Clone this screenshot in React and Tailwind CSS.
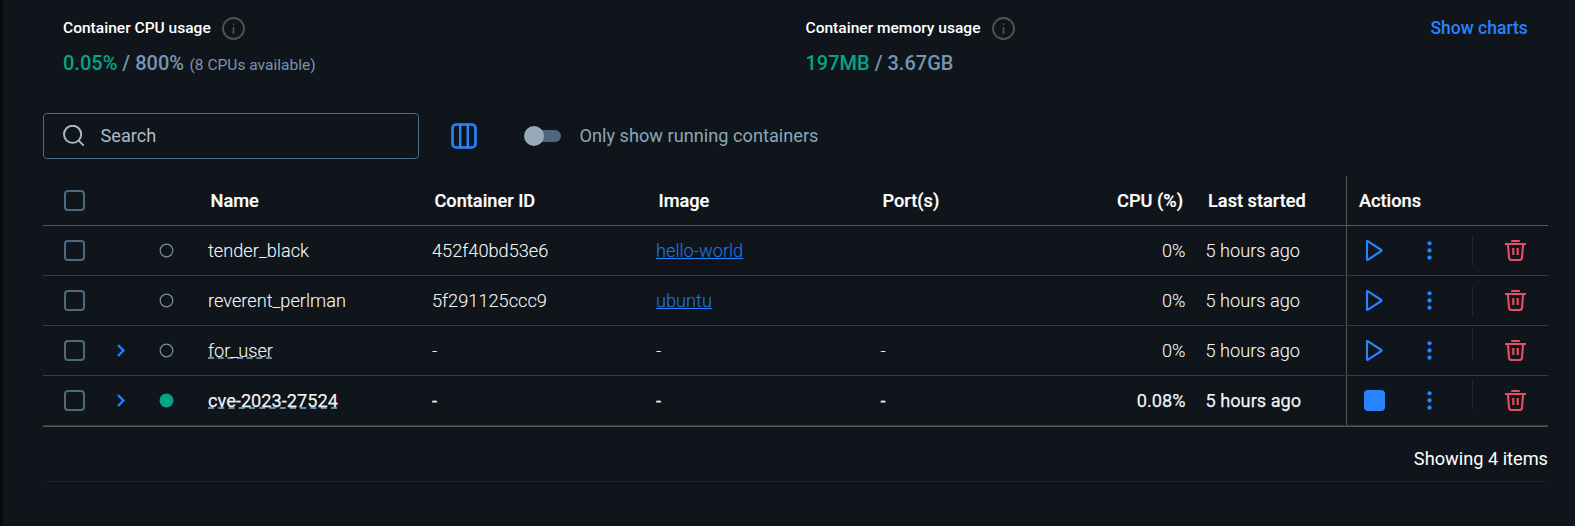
const COLS = 'grid grid-cols-[56px_44px_47px_224px_224px_224px_224px_109px_150px]';

const ROWS = [
  { name: 'tender_black', id: '452f40bd53e6', image: 'hello-world', cpu: '0%' },
  { name: 'reverent_perlman', id: '5f291125ccc9', image: 'ubuntu', cpu: '0%' },
  { name: 'for_user', group: true, cpu: '0%' },
  { name: 'cve-2023-27524', group: true, running: true, cpu: '0.08%' },
];

function InfoIcon() {
  return (
    <svg width="23" height="23" viewBox="0 0 23 23" fill="none" stroke="#505356">
      <circle cx="11.5" cy="11.5" r="10.5" strokeWidth="1.9" />
      <path d="M11.5 10.3V16.8" strokeWidth="1.7" />
      <path d="M11.5 6.4V8.2" strokeWidth="1.7" />
    </svg>
  );
}

function SearchIcon() {
  return (
    <svg width="22" height="22" viewBox="0 0 22 22" fill="none" stroke="#a9bbc8" strokeWidth="1.9" strokeLinecap="round">
      <circle cx="9.6" cy="9.3" r="8.6" />
      <path d="M15.8 15.6L20.2 20.1" />
    </svg>
  );
}

function ColumnsIcon() {
  return (
    <svg width="26" height="26" viewBox="0 0 26 26" fill="none" stroke="#2684ff">
      <rect x="1.5" y="1.5" width="23" height="23" rx="3.6" strokeWidth="2.6" />
      <path d="M9.2 2V24M16.8 2V24" strokeWidth="2.4" />
    </svg>
  );
}

function PlayIcon() {
  return (
    <svg width="18" height="21" viewBox="0 0 18 21" fill="none" stroke="#2684ff" strokeWidth="2.1" strokeLinejoin="round">
      <path d="M2 1.5V19.5Q2 20.2 2.7 19.8L16.3 11Q17 10.5 16.3 10L2.7 1.2Q2 0.8 2 1.5Z" />
    </svg>
  );
}

function StatusDot({ running }) {
  return (
    <svg width="15" height="15" viewBox="0 0 15 15" fill="none">
      {running ? <circle cx="7.5" cy="7.5" r="6.9" fill="#03a589" /> : <circle cx="7.5" cy="7.5" r="6.3" stroke="#7890a5" strokeWidth="1.2" />}
    </svg>
  );
}

function DotsIcon() {
  return (
    <svg width="5" height="19" viewBox="0 0 5 19" fill="#2684ff">
      <circle cx="2.5" cy="2.3" r="2.15" />
      <circle cx="2.5" cy="9.5" r="2.15" />
      <circle cx="2.5" cy="16.7" r="2.15" />
    </svg>
  );
}

function TrashIcon() {
  return (
    <svg width="21" height="21" viewBox="0 0 21 21" fill="none" stroke="#ea4d62">
      <path d="M6.2 1H14.8" strokeWidth="2" />
      <path d="M0 4H21" strokeWidth="2" />
      <path d="M2.9 4.5L4 17.6Q4.2 20 6.6 20H14.4Q16.8 20 17 17.6L18.1 4.5" strokeWidth="2.1" />
      <path d="M8.3 8V15M12.7 8V15" strokeWidth="2.1" />
    </svg>
  );
}

function Checkbox() {
  return <span className="ml-[21px] size-[21px] rounded-[4px] border-2 border-[#4d697f]" />;
}

function Stat({ title, used, total, note, className }) {
  return (
    <div className={className}>
      <div className="flex h-[23px] items-center gap-[11.5px]">
        <span className="pb-[2px] text-[15.55px] font-medium">{title}</span>
        <InfoIcon />
      </div>
      <div className="mt-[8px] text-[20px] leading-[30px] font-medium text-[#7794b3]">
        <span className="text-[#03a589]">{used}</span> / {total}
        {note && <span className="ml-[5.5px] text-[15.55px] font-normal">{note}</span>}
      </div>
    </div>
  );
}

function Row({ row }) {
  return (
    <div
      className={
        'flex h-[50px] text-white/95 ' +
        (row.running ? 'font-normal [-webkit-text-stroke:0.25px]' : 'font-light [-webkit-text-stroke:0.15px]')
      }
    >
      <div className={COLS + ' w-[1302px] items-center border-b border-[#2e3f4b]'}>
        <Checkbox />
        <span className="flex justify-center">
          {row.group && (
            <svg width="8" height="13" viewBox="0 0 8 13" fill="none" stroke="#2684ff" strokeWidth="2.3">
              <path d="M1 1L6.4 6.5L1 12" />
            </svg>
          )}
        </span>
        <span className="flex justify-center">
          <StatusDot running={row.running} />
        </span>
        <span className="pl-[18px]">
          {row.group ? (
            <span className="underline decoration-[#6d8aa5] decoration-dashed decoration-2 underline-offset-[1px] [text-decoration-skip-ink:none]">
              {row.name}
            </span>
          ) : (
            row.name
          )}
        </span>
        <span className="pl-[18px]">{row.id || '-'}</span>
        <span className="pl-[18px]">
          {row.image ? (
            <a className="text-[#2172dc] underline decoration-[#2684ff] decoration-1 underline-offset-1">{row.image}</a>
          ) : (
            '-'
          )}
        </span>
        <span className="pl-[18.5px]">{row.group ? '-' : ''}</span>
        <span className="pr-[9.5px] text-right">{row.cpu}</span>
        <span className="pl-[10.5px]">5 hours ago</span>
      </div>
      <div className="ml-px flex w-[202px] items-center border-b border-l border-b-[#2e3f4b] border-l-[#555656]">
        <span className="flex w-[54px] justify-center">
          {row.running ? <span className="-mr-px size-[21px] rounded-[4px] bg-[#2684ff]" /> : <PlayIcon />}
        </span>
        <span className="flex w-[57px] justify-center">
          <DotsIcon />
        </span>
        <span className={'ml-[14px] h-[30px] w-px bg-[#22272d] ' + (row.group ? '-mt-[14px]' : '')} />
        <span className="ml-[32px]">
          <TrashIcon />
        </span>
      </div>
    </div>
  );
}

export default function App() {
  return (
    <div className="h-[526px] w-[1575px] overflow-hidden border-l-3 border-[#080b0e] bg-[#10151b] font-['Roboto',sans-serif] text-[18.2px] leading-[26px] whitespace-nowrap text-white">
      <div className="flex h-[113px] pt-[17px] pl-[60px]">
        <Stat className="w-[742.5px]" title="Container CPU usage" used="0.05%" total="800%" note="(8 CPUs available)" />
        <Stat className="w-[625px]" title="Container memory usage" used="197MB" total="3.67GB" />
        <a className="-mt-[2px] text-[17.5px] font-medium text-[#2684ff]">Show charts</a>
      </div>
      <div className="flex h-[46px] items-center pl-10">
        <div className="flex h-[46px] w-[376px] items-center rounded-[4px] border border-[#4d697f] pl-[18.5px] text-[#a9bbc8]">
          <SearchIcon />
          <span className="ml-[16px]">Search</span>
        </div>
        <span className="ml-8">
          <ColumnsIcon />
        </span>
        <span className="ml-[47px] flex h-5 w-[37px] items-center">
          <span className="z-10 size-5 rounded-full bg-[#96abba]" />
          <span className="-ml-3 h-3 w-[29px] rounded-r-full bg-[#4d687e]" />
        </span>
        <span className="ml-[18.5px] text-[#8ba6b9]">Only show running containers</span>
      </div>
      <div className="mt-[17px] ml-10 w-[1505px]">
        <div className="flex h-[50px] border-b border-[#555656] font-medium">
          <div className={COLS + ' w-[1302px] items-center [-webkit-text-stroke:0.2px]'}>
            <Checkbox />
            <span />
            <span />
            <span className="pl-[20.5px]">Name</span>
            <span className="pl-[20.5px]">Container ID</span>
            <span className="pl-[20.5px]">Image</span>
            <span className="pl-[20.5px]">Port(s)</span>
            <span className="pr-[12px] text-right">CPU (%)</span>
            <span className="pl-[13px]">Last started</span>
          </div>
          <div className="ml-px flex w-[202px] items-center border-l border-[#555656] pl-3 [-webkit-text-stroke:0.2px]">Actions</div>
        </div>
        {ROWS.map((row) => (
          <Row key={row.name} row={row} />
        ))}
        <div className="h-px bg-[#555656]" />
        <div className="mt-[19px] text-right">Showing 4 items</div>
        <div className="mt-[9px] mr-[2px] ml-[3px] h-px bg-[#22272d]" />
      </div>
    </div>
  );
}
